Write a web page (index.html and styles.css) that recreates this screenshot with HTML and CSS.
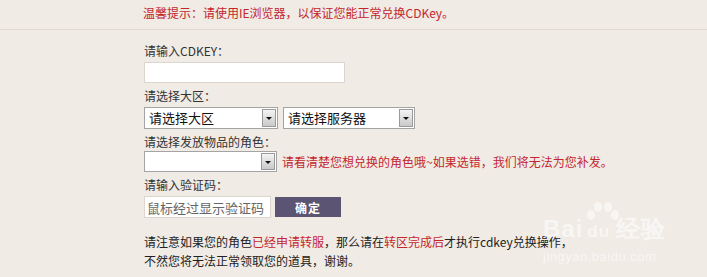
FILE: index.html
```html
<!DOCTYPE html>
<html>
<head>
    <title>CDKey兑换</title>
    <link rel="stylesheet" href="styles.css">
</head>
<body>
    <div class="notice">温馨提示：请使用IE浏览器，以保证您能正常兑换CDKey。</div>

    <div class="form">
        <!-- CDKEY -->
        <div class="label first">请输入CDKEY：</div>
        <input type="text" class="text-input cdkey">

        <!-- 区服 -->
        <div class="label">请选择大区：</div>
        <div class="row">
            <span class="select-wrap zone">
                <select><option>请选择大区</option></select>
            </span>
            <span class="select-wrap server">
                <select><option>请选择服务器</option></select>
            </span>
        </div>

        <!-- 角色 -->
        <div class="label">请选择发放物品的角色：</div>
        <div class="row role-row">
            <span class="select-wrap role">
                <select><option></option></select>
            </span>
            <span class="warn">请看清楚您想兑换的角色哦~如果选错，我们将无法为您补发。</span>
        </div>

        <!-- 验证码 -->
        <div class="label">请输入验证码：</div>
        <div class="row">
            <input type="text" class="text-input captcha" placeholder="鼠标经过显示验证码">
            <button class="submit">确定</button>
        </div>

        <p class="tips">
            请注意如果您的角色<span class="red">已经申请转服</span>，那么请在<span class="red">转区完成后</span>才执行cdkey兑换操作，<br>
            不然您将无法正常领取您的道具，谢谢。
        </p>
    </div>

    <div class="watermark">
        <svg class="wm-paw" width="40" height="30" viewBox="0 0 40 30">
            <ellipse cx="8" cy="14" rx="4" ry="5"/>
            <ellipse cx="15" cy="6" rx="4" ry="5"/>
            <ellipse cx="25" cy="6" rx="4" ry="5"/>
            <ellipse cx="32" cy="14" rx="4" ry="5"/>
        </svg>
        <div class="wm-logo">Bai<span class="wm-du">du</span>经验</div>
        <div class="wm-url">jingyan.baidu.com</div>
    </div>
</body>
</html>
```

FILE: styles.css
```css
body {
    margin: 0;
    background: #f0ebe5;
    font-family: "Noto Sans CJK SC", "Liberation Sans", sans-serif;
    font-size: 12px;
    color: #222;
    position: relative;
    height: 277px;
    overflow: hidden;
}
.notice {
    height: 29px;
    line-height: 26px;
    padding-left: 143px;
    color: #c4262e;
    border-bottom: 1px solid #e2dad2;
}
.form { padding-left: 144px; }
.label { line-height: 18px; margin-top: 4px; color: #333; }
.label.first { margin-top: 12px; }
.row { display: flex; align-items: center; gap: 5px; margin-top: 2px; }
.role-row { margin-top: 0; }

.text-input {
    display: block;
    box-sizing: border-box;
    margin: 2px 0 0;
    height: 21px;
    border: 1px solid #ddd6cf;
    background: #fff;
    padding: 0 3px;
    font-family: inherit;
    outline: none;
}
.cdkey { width: 201px; }
.captcha {
    width: 127px;
    height: 22px;
    margin: 0;
    font-size: 13px;
    padding: 0 2px;
}
.captcha::placeholder { color: #666; }

.select-wrap {
    position: relative;
    display: block;
    box-sizing: border-box;
    height: 22px;
    border: 1px solid #a4a4a4;
    background: #fff;
}
.select-wrap select {
    appearance: none;
    -webkit-appearance: none;
    border: none;
    background: transparent;
    width: 100%;
    height: 100%;
    padding: 0 0 1px 4px;
    font-family: inherit;
    font-size: 13px;
    color: #111;
    outline: none;
}
.select-wrap::after {
    content: "";
    position: absolute;
    top: 1px;
    right: 1px;
    bottom: 1px;
    width: 14px;
    border: 1px solid #9a9a9a;
    box-sizing: border-box;
    background: linear-gradient(#f4f4f4, #c9c9c9);
}
.select-wrap::before {
    content: "";
    position: absolute;
    right: 5px;
    top: 9px;
    border-left: 3px solid transparent;
    border-right: 3px solid transparent;
    border-top: 3px solid #111;
    z-index: 1;
}
.zone { width: 134px; }
.server { width: 132px; }
.role { width: 133px; height: 21px; }
.warn { color: #c4262e; }

.submit {
    width: 66px;
    height: 20px;
    margin-left: -1px;
    border: none;
    background: #5b5472;
    color: #fff;
    font-family: inherit;
    font-size: 12px;
    font-weight: bold;
    letter-spacing: 1px;
    padding: 0;
}

.tips {
    margin: 14px 0 0;
    line-height: 19px;
    color: #222;
}
.red { color: #c4262e; }

/* 水印 */
.watermark {
    position: absolute;
    left: 543px;
    top: 201px;
    width: 130px;
    color: rgba(255, 255, 255, 0.6);
    font-family: "Liberation Sans", sans-serif;
    pointer-events: none;
}
.wm-paw {
    display: block;
    margin-left: 40px;
    fill: rgba(255, 255, 255, 0.55);
}
.wm-logo {
    margin-top: -14px;
    font-size: 24px;
    font-weight: bold;
    line-height: 24px;
    letter-spacing: 1px;
}
.wm-du { font-size: 17px; margin: 0 6px 0 4px; }
.wm-url { font-size: 13px; line-height: 14px; margin-top: 6px; letter-spacing: 0.5px; }
```
